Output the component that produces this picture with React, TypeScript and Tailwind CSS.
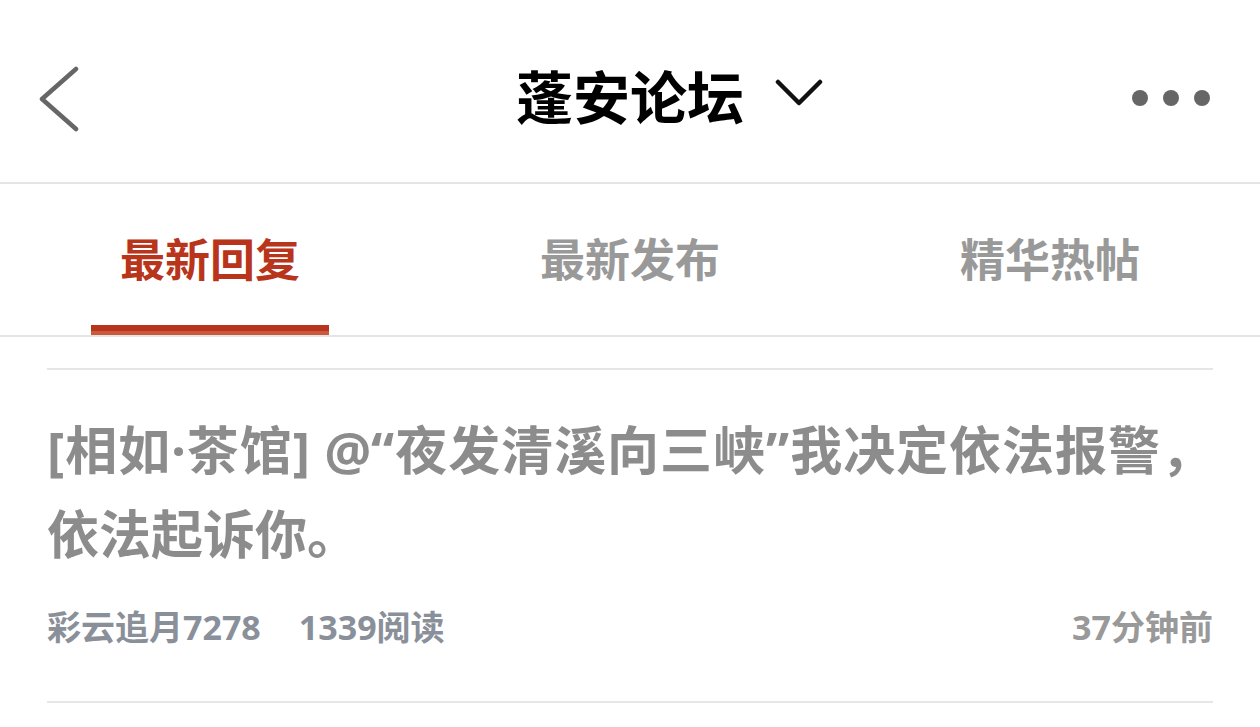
const FONT = { fontFamily: '"Noto Sans", "Noto Sans CJK SC", sans-serif' };

const TABS = ['最新回复', '最新发布', '精华热帖'];

export default function App() {
  const active = 0;

  return (
    <div className="w-[1260px] h-[727px] bg-white overflow-hidden" style={FONT}>
      {/* top bar */}
      <div className="relative h-[184px] pt-[12px] flex items-center justify-center border-b-2 border-[#e4e4e4]">
        <button className="absolute left-[38px] top-[66px]">
          <svg width="44" height="66" viewBox="0 0 44 66" fill="none">
            <path d="M38 3 L4 33 L38 63" stroke="#666" strokeWidth="4.5" strokeLinecap="round" strokeLinejoin="round" />
          </svg>
        </button>
        <div className="relative">
          <h1 className="text-[57px] leading-none font-bold text-black">蓬安论坛</h1>
          <svg className="absolute left-[259px] top-[10px]" width="48" height="28" viewBox="0 0 48 28" fill="none">
            <path d="M3 3 L24 24 L45 3" stroke="#111" strokeWidth="4.5" strokeLinecap="round" strokeLinejoin="round" />
          </svg>
        </div>
        <div className="absolute right-[50px] top-[90px] flex gap-[15px]">
          <span className="w-[16px] h-[16px] rounded-full bg-[#666]" />
          <span className="w-[16px] h-[16px] rounded-full bg-[#666]" />
          <span className="w-[16px] h-[16px] rounded-full bg-[#666]" />
        </div>
      </div>

      {/* tabs */}
      <div className="grid grid-cols-3 h-[153px] border-b-2 border-[#e4e4e4]">
        {TABS.map((t, i) => (
          <div key={t} className="flex flex-col items-center">
            <div className={`mt-[52px] text-[45px] leading-[48px] font-bold ${i === active ? 'text-[#b8341a]' : 'text-[#999]'}`}>
              {t}
            </div>
            {i === active && (
              <div className="mt-auto w-[238px]">
                <div className="h-[6px] bg-[#b8341a]" />
                <div className="h-[4px] bg-[#c95a3e]" />
              </div>
            )}
          </div>
        ))}
      </div>

      {/* list */}
      <div className="px-[47px] pt-[31px]">
        <div className="border-t-2 border-[#e6e6e6]" />
        <div className="pt-[38px] pb-[54px] border-b-2 border-[#e6e6e6]">
          <h2 className="text-[52px] leading-[84px] font-bold text-[#8c8c8c] text-justify">
            [相如·茶馆] @“夜发清溪向三峡”我决定依法报警，依法起诉你。
          </h2>
          <div className="mt-[31px] flex items-center text-[34px] leading-[40px] font-bold">
            <span className="text-[#8a9099]">彩云追月7278</span>
            <span className="ml-[38px] text-[#8a9099]">1339阅读</span>
            <span className="ml-auto text-[#999]">37分钟前</span>
          </div>
        </div>
      </div>
    </div>
  );
}
